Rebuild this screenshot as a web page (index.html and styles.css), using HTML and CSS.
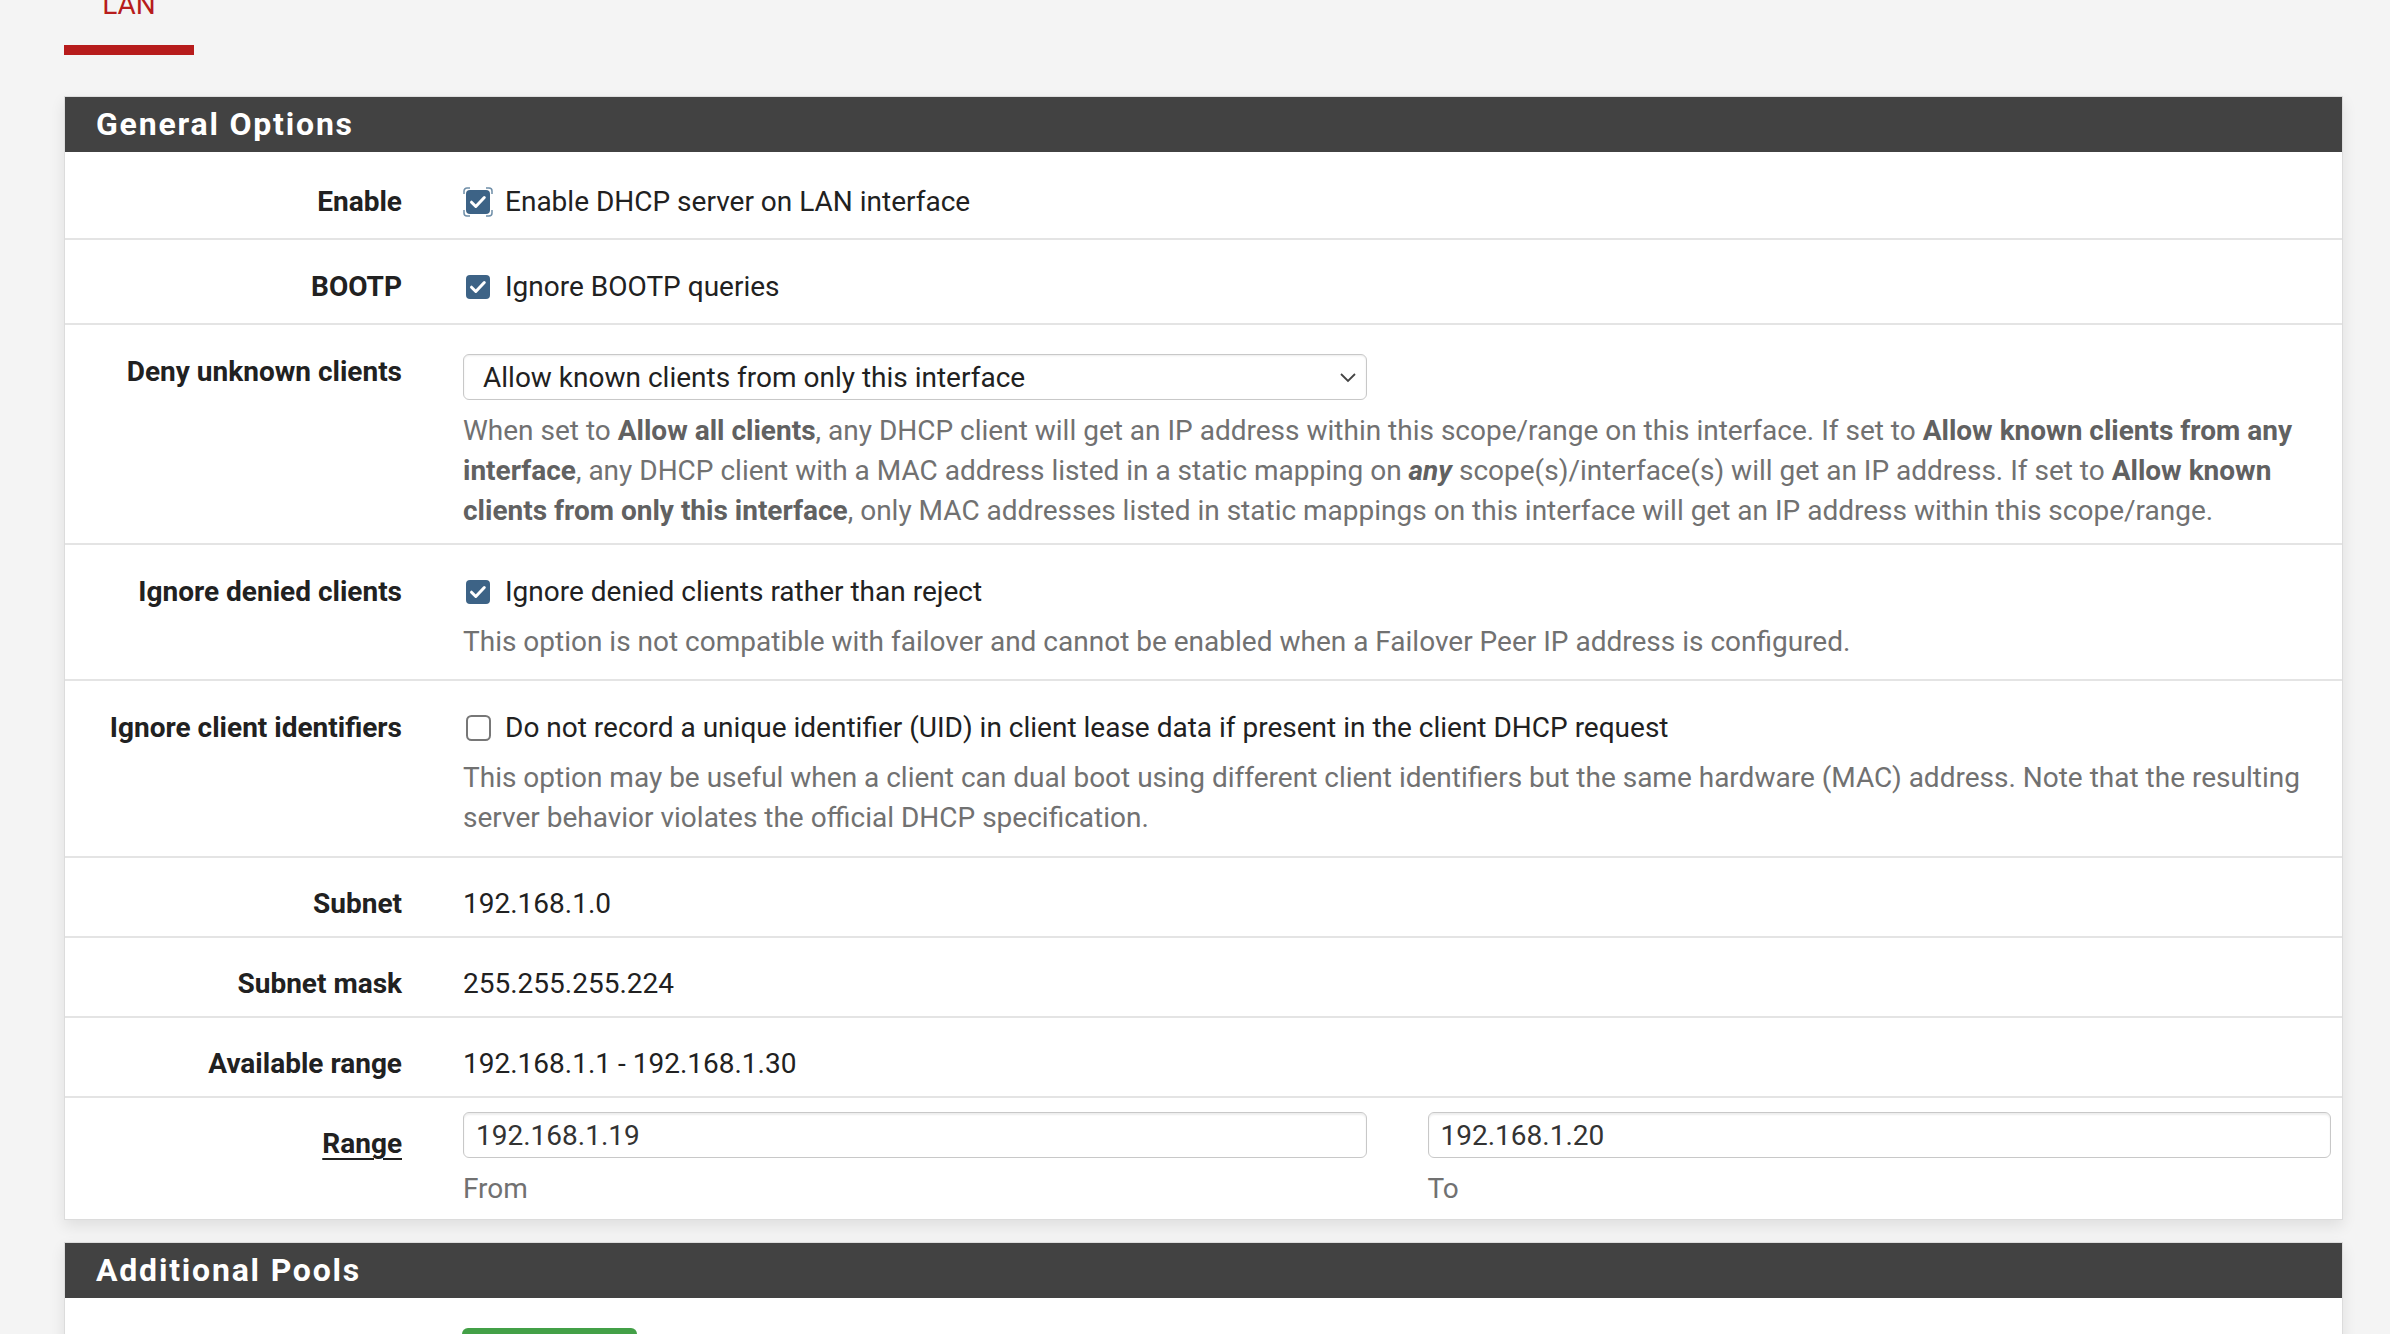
FILE: index.html
```html
<!DOCTYPE html>
<html lang="en">
<head>
  <meta charset="UTF-8" />
  <meta name="viewport" content="width=device-width, initial-scale=1.0" />
  <title>Services / DHCP Server / LAN</title>
  <link rel="stylesheet" href="styles.css">
</head>
<body>
  <div class="page">
    <ul class="tabs">
      <li class="tab active"><a href="#">LAN</a></li>
    </ul>

    <section class="panel">
      <h2 class="panel-title">General Options</h2>
      <div class="panel-body">

        <div class="row row-check">
          <div class="row-label">Enable</div>
          <div class="row-body">
            <label class="check">
              <svg class="box" width="30" height="30" viewBox="0 0 30 30">
                <path class="focus" d="M1 7V4a3 3 0 0 1 3-3h3M23 1h3a3 3 0 0 1 3 3v3M29 23v3a3 3 0 0 1-3 3h-3M7 29H4a3 3 0 0 1-3-3v-3" />
                <rect class="fill" x="3" y="3" width="24" height="24" rx="4" />
                <path class="tick" d="M8.5 15.2l4.3 4.3 8.5-9" />
              </svg>
              Enable DHCP server on LAN interface
            </label>
          </div>
        </div>

        <div class="row row-check">
          <div class="row-label">BOOTP</div>
          <div class="row-body">
            <label class="check">
              <svg class="box" width="30" height="30" viewBox="0 0 30 30">
                <rect class="fill" x="3" y="3" width="24" height="24" rx="4" />
                <path class="tick" d="M8.5 15.2l4.3 4.3 8.5-9" />
              </svg>
              Ignore BOOTP queries
            </label>
          </div>
        </div>

        <div class="row row-select">
          <div class="row-label">Deny unknown clients</div>
          <div class="row-body">
            <div class="select-wrap">
              <select class="select">
                <option>Allow known clients from only this interface</option>
                <option>Allow all clients</option>
                <option>Allow known clients from any interface</option>
              </select>
              <svg class="chevron" width="18" height="12" viewBox="0 0 18 12">
                <path d="M2 3l7 7 7-7" />
              </svg>
            </div>
            <p class="help">When set to <b>Allow all clients</b>, any DHCP client will get an IP address within this scope/range on this interface. If set to <b>Allow known clients from any interface</b>, any DHCP client with a MAC address listed in a static mapping on <b><i>any</i></b> scope(s)/interface(s) will get an IP address. If set to <b>Allow known clients from only this interface</b>, only MAC addresses listed in static mappings on this interface will get an IP address within this scope/range.</p>
          </div>
        </div>

        <div class="row row-check row-denied">
          <div class="row-label">Ignore denied clients</div>
          <div class="row-body">
            <label class="check">
              <svg class="box" width="30" height="30" viewBox="0 0 30 30">
                <rect class="fill" x="3" y="3" width="24" height="24" rx="4" />
                <path class="tick" d="M8.5 15.2l4.3 4.3 8.5-9" />
              </svg>
              Ignore denied clients rather than reject
            </label>
            <p class="help">This option is not compatible with failover and cannot be enabled when a Failover Peer IP address is configured.</p>
          </div>
        </div>

        <div class="row row-check row-uid">
          <div class="row-label">Ignore client identifiers</div>
          <div class="row-body">
            <label class="check">
              <svg class="box" width="30" height="30" viewBox="0 0 30 30">
                <rect class="empty" x="4" y="3" width="23" height="24" rx="4.5" />
              </svg>
              Do not record a unique identifier (UID) in client lease data if present in the client DHCP request
            </label>
            <p class="help">This option may be useful when a client can dual boot using different client identifiers but the same hardware (MAC) address. Note that the resulting server behavior violates the official DHCP specification.</p>
          </div>
        </div>

        <div class="row row-static">
          <div class="row-label">Subnet</div>
          <div class="row-body">192.168.1.0</div>
        </div>

        <div class="row row-static">
          <div class="row-label">Subnet mask</div>
          <div class="row-body">255.255.255.224</div>
        </div>

        <div class="row row-static">
          <div class="row-label">Available range</div>
          <div class="row-body">192.168.1.1 - 192.168.1.30</div>
        </div>

        <div class="row row-range">
          <div class="row-label"><span class="link-label">Range</span></div>
          <div class="row-body range-grid">
            <div>
              <input class="input" type="text" value="192.168.1.19" />
              <p class="help">From</p>
            </div>
            <div>
              <input class="input" type="text" value="192.168.1.20" />
              <p class="help">To</p>
            </div>
          </div>
        </div>

      </div>
    </section>

    <section class="panel">
      <h2 class="panel-title">Additional Pools</h2>
      <div class="panel-body pools-body">
        <button class="btn-add">Add pool</button>
      </div>
    </section>
  </div>
</body>
</html>
```

FILE: styles.css
```css
:root {
  --accent: #b71c1c;
  --header: #424242;
  --page-bg: #f4f4f4;
  --line: #e4e4e4;
  --text: #212121;
  --muted: #717171;
  --check: #3d6386;
  --green: #43a047;
}
* {
  box-sizing: border-box;
}
body {
  margin: 0;
  background: var(--page-bg);
  color: var(--text);
  font-family: Roboto, 'Liberation Sans', sans-serif;
  font-size: 28px;
  overflow: hidden;
}
.page {
  padding: 0 47px 0 64px;
}

/* tabs */
.tabs {
  list-style: none;
  margin: 0;
  padding: 0;
  display: flex;
  height: 55px;
}
.tab {
  display: flex;
  width: 130px;
  height: 55px;
  border-bottom: 10px solid var(--accent);
}
.tab a {
  display: block;
  width: 100%;
  margin-top: -9px;
  line-height: 27px;
  text-align: center;
  color: var(--accent);
  text-decoration: none;
}

/* panels */
.panel {
  margin-top: 41px;
  background: #fff;
  border: 1px solid #dcdcdc;
  box-shadow: 0 6px 14px rgba(0, 0, 0, 0.09);
}
.panel + .panel {
  margin-top: 22px;
}
.panel-title {
  margin: 0;
  height: 55px;
  padding-left: 31px;
  background: var(--header);
  color: #fff;
  font-size: 32px;
  font-weight: 700;
  letter-spacing: 1.8px;
  line-height: 55px;
}

/* form rows */
.row {
  display: flex;
  border-top: 2px solid var(--line);
  line-height: 40px;
}
.row:first-child {
  border-top: 0;
  padding-top: 3px;
}
.row-label {
  width: 337px;
  flex-shrink: 0;
  padding-top: 27px;
  text-align: right;
  font-weight: 700;
}
.row-body {
  flex: 1;
  margin-left: 61px;
  padding: 27px 11px 16px 0;
}
.row-denied .row-body {
  padding-bottom: 17px;
}
.row-uid .row-body {
  padding-bottom: 18px;
}
.row-static .row-label,
.row-static .row-body {
  padding-top: 26px;
}
.row-static .row-body {
  padding-bottom: 12px;
}
.row-select .row-body {
  padding-top: 29px;
  padding-bottom: 12px;
}
.row-range .row-label {
  padding-top: 26px;
}
.row-range .row-body {
  padding-top: 14px;
  padding-bottom: 10px;
}

.check {
  display: flex;
  align-items: center;
  gap: 12px;
}
.box {
  flex-shrink: 0;
}
.box .fill {
  fill: var(--check);
}
.box .tick {
  fill: none;
  stroke: #fff;
  stroke-width: 3;
  stroke-linecap: round;
  stroke-linejoin: round;
}
.box .focus {
  fill: none;
  stroke: #6f8ea8;
  stroke-width: 1.5;
}
.box .empty {
  fill: #fff;
  stroke: #777;
  stroke-width: 2;
}

.help {
  margin: 10px 0 0;
  color: var(--muted);
}
.help b {
  color: #616161;
}

.select-wrap {
  position: relative;
  width: calc((100% - 61px) / 2);
  margin-bottom: 11px;
}
.select {
  display: block;
  width: 100%;
  height: 46px;
  padding: 0 50px 0 19px;
  border: 1.5px solid #c8c8c8;
  border-radius: 6px;
  background: #fff;
  box-shadow: inset 0 1px 2px rgba(0, 0, 0, 0.08);
  color: var(--text);
  font-family: inherit;
  font-size: 28px;
  appearance: none;
}
.chevron {
  position: absolute;
  right: 10px;
  top: 17px;
  pointer-events: none;
}
.chevron path {
  fill: none;
  stroke: #444;
  stroke-width: 1.8;
}
.row-select .help {
  margin-top: 0;
}

.range-grid {
  display: grid;
  grid-template-columns: 1fr 1fr;
  column-gap: 61px;
}
.input {
  display: block;
  width: 100%;
  height: 46px;
  padding: 0 12px;
  border: 1.5px solid #c8c8c8;
  border-radius: 6px;
  box-shadow: inset 0 2px 2px rgba(0, 0, 0, 0.07);
  color: #333;
  font-family: inherit;
  font-size: 28px;
}
.range-grid .help {
  margin-top: 11px;
}
.link-label {
  text-decoration: underline;
  text-decoration-thickness: 2px;
  text-underline-offset: 5px;
}

.pools-body {
  padding: 30px 0 40px 397px;
}
.btn-add {
  width: 175px;
  height: 46px;
  border: none;
  border-radius: 6px;
  background: var(--green);
  color: #fff;
  font-family: inherit;
  font-size: 28px;
}
```
